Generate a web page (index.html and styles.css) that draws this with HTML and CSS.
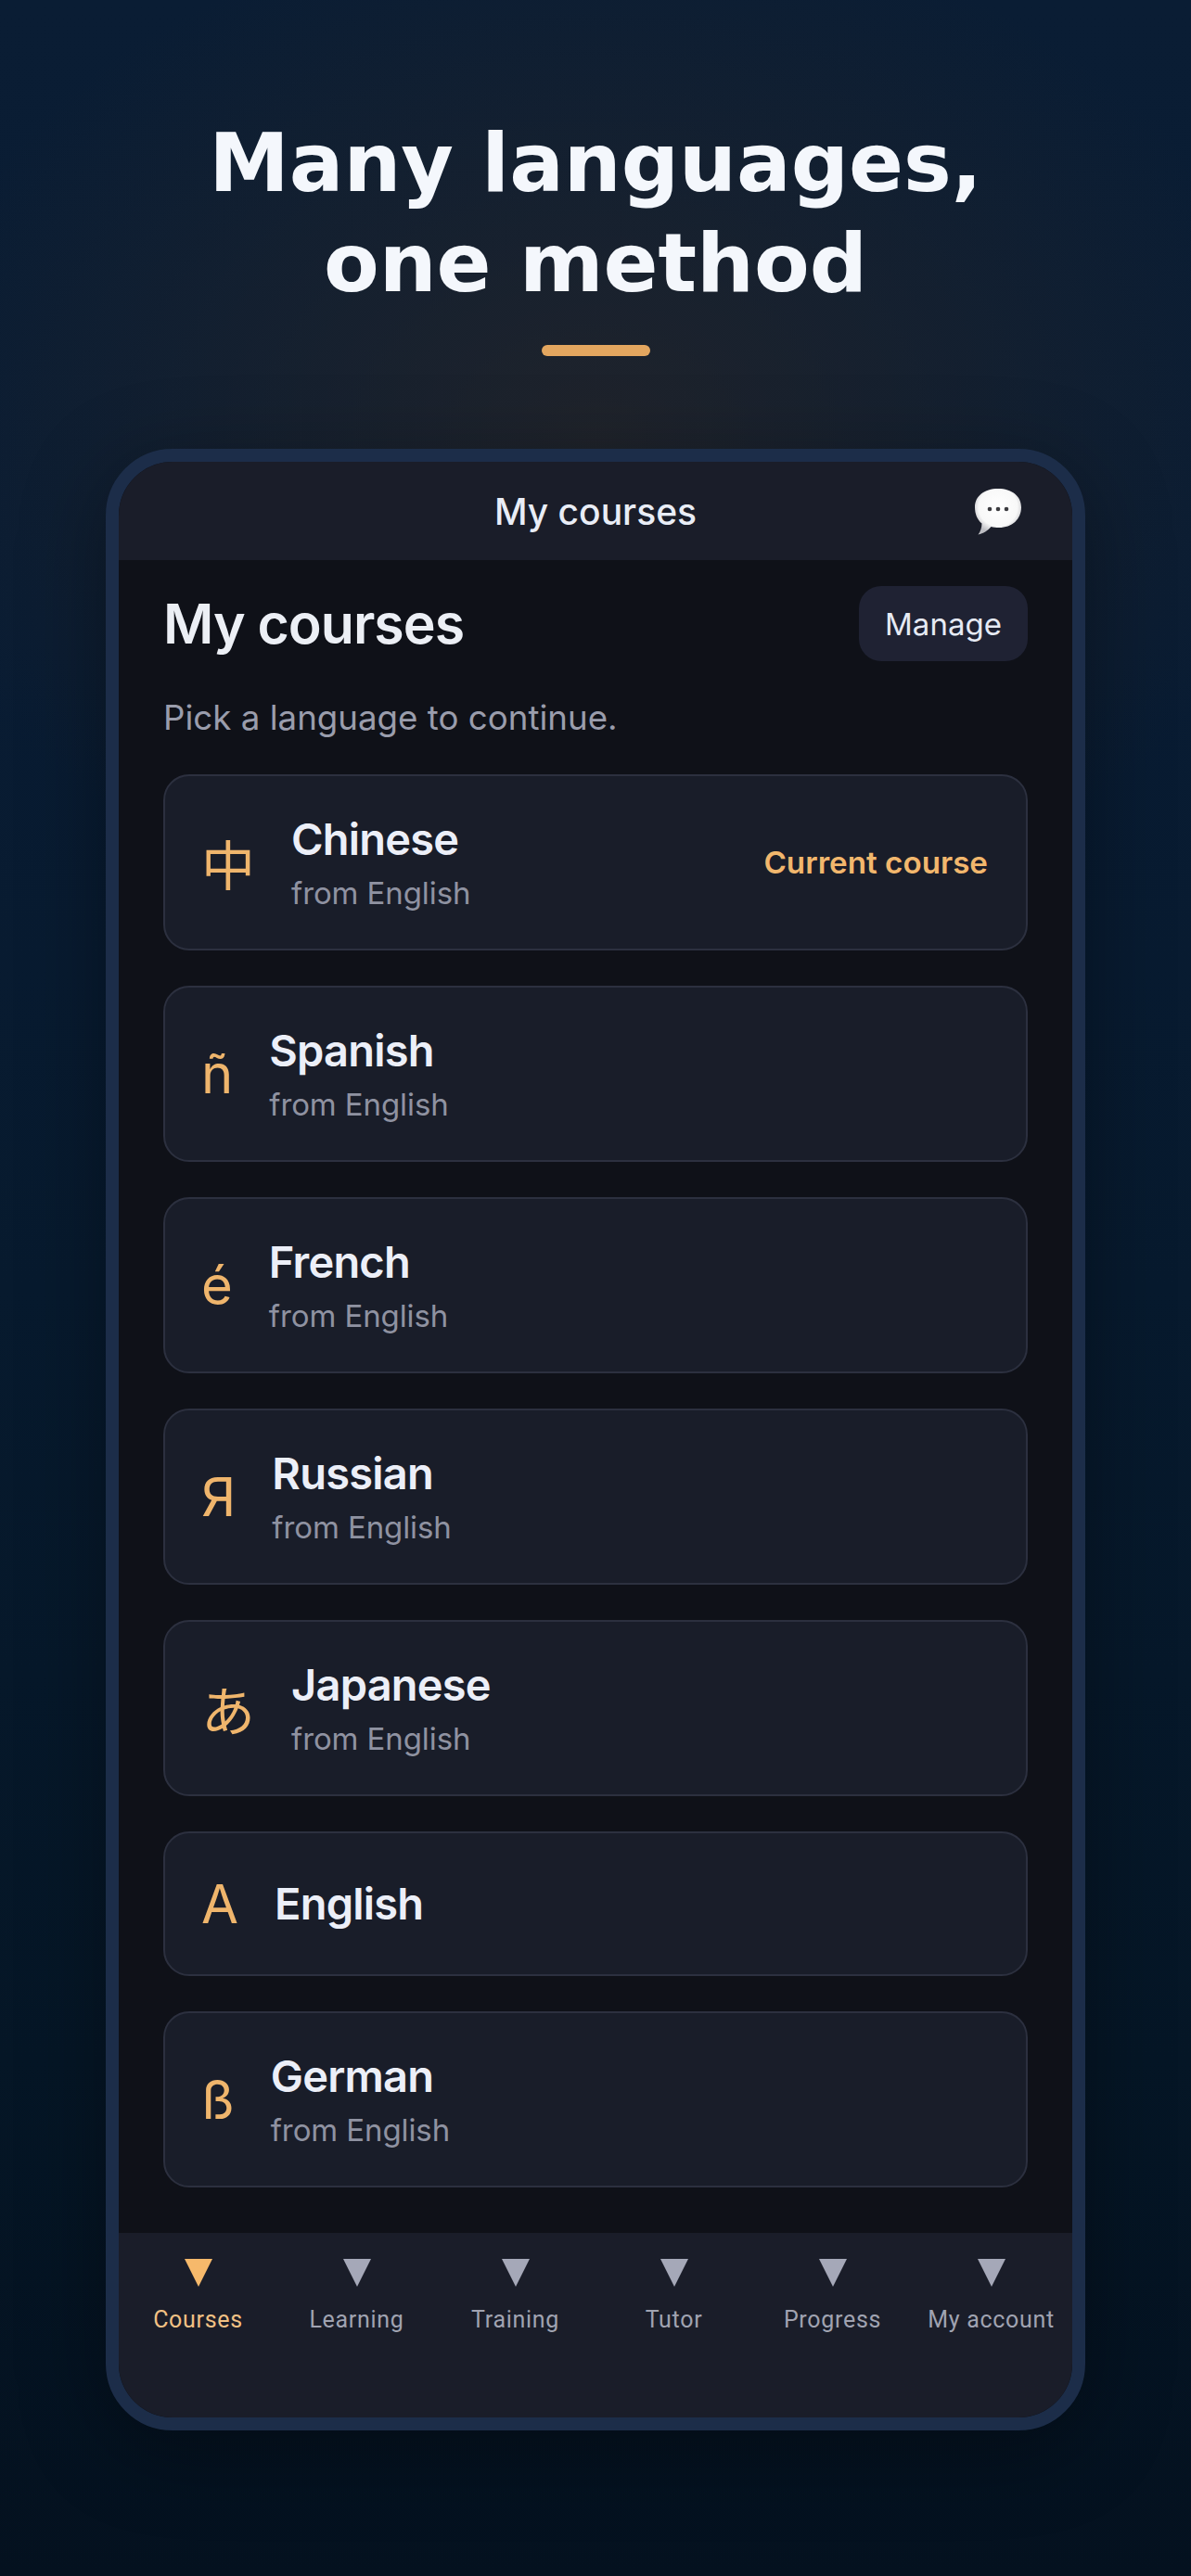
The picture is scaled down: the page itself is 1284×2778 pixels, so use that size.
FILE: index.html
```html
<!DOCTYPE html>
<html lang="en">
<head>
    <meta charset="UTF-8">
    <meta name="viewport" content="width=device-width, initial-scale=1.0">
    <title>Many languages, one method</title>
    <link rel="stylesheet" href="styles.css">
</head>
<body>
    <div class="page">
        <div class="hero">
            <h1>Many languages,<br>one method</h1>
            <div class="hero-bar"></div>
        </div>
        <div class="phone">
            <div class="topbar">
                <span class="topbar-title">My courses</span>
                <svg class="chat-icon" viewBox="0 0 52 50" aria-hidden="true">
                    <defs>
                        <radialGradient id="bubble" cx="50%" cy="40%" r="58%">
                            <stop offset="0%" stop-color="#ffffff"/>
                            <stop offset="72%" stop-color="#f8f8f8"/>
                            <stop offset="100%" stop-color="#bdbdc2"/>
                        </radialGradient>
                    </defs>
                    <path d="M26 0C41 0 51 8 51 20C51 33 41 42 27 42C24 42 21 41.600 18.500 41C15 45 10 48.500 4.500 49.500C7 46.500 8.500 42 8.500 37.500C3.500 33.500 1 27 1 20C1 8 11 0 26 0Z" fill="url(#bubble)"/>
                    <circle cx="17" cy="22" r="2.300" fill="#3c3c40"/>
                    <circle cx="26" cy="22" r="2.300" fill="#3c3c40"/>
                    <circle cx="35" cy="22" r="2.300" fill="#3c3c40"/>
                </svg>
            </div>
            <div class="content">
                <div class="content-head">
                    <h2>My courses</h2>
                    <button class="manage-btn">Manage</button>
                </div>
                <p class="hint">Pick a language to continue.</p>
                <div class="course-list">
                    <div class="course">
                        <span class="course-icon">中</span>
                        <div class="course-text">
                            <div class="course-name">Chinese</div>
                            <div class="course-from">from English</div>
                        </div>
                        <span class="course-current">Current course</span>
                    </div>
                    <div class="course">
                        <span class="course-icon">ñ</span>
                        <div class="course-text">
                            <div class="course-name">Spanish</div>
                            <div class="course-from">from English</div>
                        </div>
                    </div>
                    <div class="course">
                        <span class="course-icon">é</span>
                        <div class="course-text">
                            <div class="course-name">French</div>
                            <div class="course-from">from English</div>
                        </div>
                    </div>
                    <div class="course">
                        <span class="course-icon">Я</span>
                        <div class="course-text">
                            <div class="course-name">Russian</div>
                            <div class="course-from">from English</div>
                        </div>
                    </div>
                    <div class="course">
                        <span class="course-icon">あ</span>
                        <div class="course-text">
                            <div class="course-name">Japanese</div>
                            <div class="course-from">from English</div>
                        </div>
                    </div>
                    <div class="course course-single">
                        <span class="course-icon">A</span>
                        <div class="course-text">
                            <div class="course-name">English</div>
                        </div>
                    </div>
                    <div class="course">
                        <span class="course-icon">ß</span>
                        <div class="course-text">
                            <div class="course-name">German</div>
                            <div class="course-from">from English</div>
                        </div>
                    </div>
                </div>
            </div>
            <div class="tabbar">
                <div class="tab tab-active"><span class="tab-arrow"></span>Courses</div>
                <div class="tab"><span class="tab-arrow"></span>Learning</div>
                <div class="tab"><span class="tab-arrow"></span>Training</div>
                <div class="tab"><span class="tab-arrow"></span>Tutor</div>
                <div class="tab"><span class="tab-arrow"></span>Progress</div>
                <div class="tab"><span class="tab-arrow"></span>My account</div>
            </div>
        </div>
    </div>
</body>
</html>
```

FILE: styles.css
```css
body {
    margin: 0;
    padding: 0;
    background-color: #04101f;
    font-family: Inter, "Noto Sans CJK JP", sans-serif;
}
.page {
    width: 1284px;
    height: 2778px;
    overflow: hidden;
    background:
        radial-gradient(ellipse 760px 560px at 642px 470px, rgba(40, 38, 40, 0.72), rgba(40, 38, 40, 0) 100%),
        linear-gradient(180deg, #0a1d34 0%, #091c33 25%, #071a2e 50%, #051626 80%, #04111f 100%);
}
.hero {
    display: flex;
    flex-direction: column;
    align-items: center;
    padding-top: 122px;
}
h1 {
    margin: 0;
    font-family: "DejaVu Sans", sans-serif;
    font-size: 87px;
    font-weight: 700;
    line-height: 108px;
    text-align: center;
    color: #f4f7fc;
}
.hero-bar {
    width: 117px;
    height: 12px;
    margin-top: 34px;
    border-radius: 6px;
    background-color: #e3a65f;
}
.phone {
    display: flex;
    flex-direction: column;
    width: 1056px;
    height: 2137px;
    box-sizing: border-box;
    margin: 100px 0 0 114px;
    border: 14px solid #1c2d49;
    border-radius: 72px;
    overflow: hidden;
    background-color: #0f1118;
    box-shadow: 0 20px 90px rgba(0, 0, 0, 0.35);
}
.topbar {
    display: flex;
    align-items: center;
    justify-content: center;
    position: relative;
    height: 106px;
    flex-shrink: 0;
    background-color: #1a1d29;
}
.topbar-title {
    font-size: 39px;
    font-weight: 500;
    color: #e9edf6;
}
.chat-icon {
    position: absolute;
    top: 29px;
    right: 54px;
    width: 52px;
    height: 50px;
}
.content {
    flex: 1;
    padding: 28px 48px 0;
}
.content-head {
    display: flex;
    align-items: center;
    justify-content: space-between;
}
h2 {
    margin: 0;
    font-size: 59px;
    font-weight: 600;
    letter-spacing: -1px;
    color: #eceff5;
}
.manage-btn {
    width: 182px;
    height: 81px;
    padding: 0;
    border: 0;
    border-radius: 24px;
    background-color: #1f2233;
    font-family: inherit;
    font-size: 33px;
    color: #e6eaf4;
}
.hint {
    margin: 38px 0 0;
    font-size: 36.700px;
    line-height: 46px;
    color: #9a9dac;
}
.course-list {
    display: flex;
    flex-direction: column;
    gap: 38px;
    margin-top: 38px;
}
.course {
    display: flex;
    align-items: center;
    gap: 42px;
    height: 190px;
    box-sizing: border-box;
    padding: 0 41px 0 39px;
    border: 2px solid #2c303f;
    border-radius: 28px;
    background-color: #191d29;
}
.course-single {
    height: 156px;
}
.course-icon {
    font-size: 58px;
    letter-spacing: -3px;
    color: #efb56c;
}
.course-text {
    flex: 1;
}
.course-name {
    font-size: 47px;
    font-weight: 600;
    letter-spacing: -0.800px;
    line-height: 56px;
    color: #eceff8;
}
.course-from {
    margin-top: 9px;
    font-size: 33px;
    letter-spacing: -0.100px;
    line-height: 42px;
    color: #8f92a1;
}
.course-current {
    font-size: 33.200px;
    font-weight: 600;
    color: #f2b76d;
}
.tabbar {
    display: flex;
    height: 199px;
    flex-shrink: 0;
    padding-right: 2px;
    background-color: #1a1d29;
}
.tab {
    flex: 1;
    display: flex;
    flex-direction: column;
    align-items: center;
    padding-top: 28px;
    font-family: Roboto, sans-serif;
    font-size: 25px;
    letter-spacing: 0.700px;
    color: #a0a3b1;
}
.tab-arrow {
    width: 0;
    height: 0;
    margin-bottom: 21px;
    border-left: 15px solid transparent;
    border-right: 15px solid transparent;
    border-top: 30px solid #a5a8b8;
}
.tab-active {
    color: #f2c184;
}
.tab-active .tab-arrow {
    border-top-color: #f6b96b;
}
```
